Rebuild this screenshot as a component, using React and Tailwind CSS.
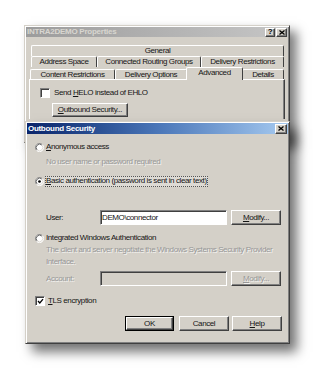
import React from "react";

const raised =
  "border border-t-white border-l-white border-r-[#404040] border-b-[#404040] shadow-[inset_-1px_-1px_#808080] bg-[#d4d0c8]";
const sunken =
  "border border-t-[#808080] border-l-[#808080] border-r-white border-b-white shadow-[inset_1px_1px_#404040]";
const dis = "text-[#979797] [text-shadow:1px_1px_0_rgba(255,255,255,0.75)]";

function Radio({ checked }) {
  return (
    <svg width="9" height="9" viewBox="0 0 12 12" className="shrink-0">
      <circle cx="6" cy="6" r="5.5" fill="#fff" />
      <path d="M2.11 9.89 A5.5 5.5 0 0 1 9.89 2.11" stroke="#808080" strokeWidth="1" fill="none" />
      <path d="M9.89 2.11 A5.5 5.5 0 0 1 2.11 9.89" stroke="#ffffff" strokeWidth="1" fill="none" />
      <path d="M2.82 9.18 A4.5 4.5 0 0 1 9.18 2.82" stroke="#404040" strokeWidth="1" fill="none" />
      <path d="M9.18 2.82 A4.5 4.5 0 0 1 2.82 9.18" stroke="#d4d0c8" strokeWidth="1" fill="none" />
      {checked && <circle cx="6" cy="6" r="1.8" fill="#000" />}
    </svg>
  );
}

function Check({ checked }) {
  return (
    <div className={`w-[8px] h-[8px] shrink-0 bg-white box-content ${sunken} flex items-center justify-center`}>
      {checked && (
        <svg width="7" height="7" viewBox="0 0 7 7">
          <path d="M1 3 L2.8 5 L6 1.2" stroke="#000" strokeWidth="1.3" fill="none" />
        </svg>
      )}
    </div>
  );
}

function Btn({ children, className = "", disabled, def }) {
  const inner = (
    <div className={`${raised} flex items-center justify-center h-full w-full ${disabled ? dis : ""}`}>
      {children}
    </div>
  );
  if (def)
    return <div className={`border border-black ${className}`}>{inner}</div>;
  return <div className={className}>{inner}</div>;
}

function Tab({ children, w, selected }) {
  return (
    <div
      className={`flex items-center justify-center border-t border-l border-t-white border-l-white border-r border-r-[#404040] rounded-t-[2px] bg-[#d4d0c8] shrink-0 ${
        selected ? "h-[13px] relative z-10 -mx-[1px]" : "h-[10px] mt-[2px]"
      }`}
      style={{ width: w }}
    >
      {children}
    </div>
  );
}

function TitleBtn({ children, w }) {
  return (
    <div
      className={`${raised} h-[9px] flex items-center justify-center text-black font-bold text-[8px] leading-none`}
      style={{ width: w }}
    >
      {children}
    </div>
  );
}

const XGlyph = () => (
  <svg width="6" height="5" viewBox="0 0 6 5">
    <path d="M0.5 0.5 L5.5 4.5 M5.5 0.5 L0.5 4.5" stroke="#000" strokeWidth="1.3" />
  </svg>
);

export default function App() {
  return (
    <div className="relative w-[336px] h-[389px] bg-white overflow-hidden font-['Liberation_Sans',Arial,sans-serif] text-[8px] leading-[12px] tracking-[-0.4px] text-[#151515]">
      {/* Outer properties window */}
      <div className="absolute left-[24px] top-[25px] w-[266px] h-[118px] p-[1px] bg-[#d4d0c8] border border-t-[#d4d0c8] border-l-[#d4d0c8] border-r-[#404040] border-b-[#404040] shadow-[inset_1px_1px_#fff,inset_-1px_-1px_#808080,7px_6px_10px_rgba(0,0,0,0.5)] flex flex-col">
        <div className="h-[10px] flex items-center justify-between bg-gradient-to-r from-[#9c9c9c] to-[#c6c6c6] pl-[1px] pr-[1px]">
          <span className="font-bold text-[#d8d6d0] tracking-[-0.25px] leading-none">INTRA2DEMO Properties</span>
          <div className="flex gap-[1px]">
            <TitleBtn w={10}>?</TitleBtn>
            <TitleBtn w={11}>
              <XGlyph />
            </TitleBtn>
          </div>
        </div>
        <div className="mt-[8px] ml-[3px] w-[256px] flex flex-col leading-none">
          <div className="flex ml-[2px] h-[11px]">
            <div className="flex items-center justify-center w-[253px] h-[11px] border-t border-l border-t-white border-l-white border-r border-r-[#404040] rounded-t-[2px]">
              General
            </div>
          </div>
          <div className="flex ml-[2px] h-[11px]">
            <div className="flex items-center justify-center w-[66px] h-[11px] border-t border-l border-t-white border-l-white border-r border-r-[#404040] rounded-t-[2px]">
              Address Space
            </div>
            <div className="flex items-center justify-center w-[104px] h-[11px] border-t border-l border-t-white border-l-white border-r border-r-[#404040] rounded-t-[2px]">
              Connected Routing Groups
            </div>
            <div className="flex items-center justify-center w-[83px] h-[11px] border-t border-l border-t-white border-l-white border-r border-r-[#404040] rounded-t-[2px]">
              Delivery Restrictions
            </div>
          </div>
          <div className="flex ml-[1px] h-[12px] items-start">
            <Tab w={85}>Content Restrictions</Tab>
            <Tab w={72}>Delivery Options</Tab>
            <Tab w={57} selected>
              <span className="-mt-[2px]">Advanced</span>
            </Tab>
            <Tab w={42}>Details</Tab>
          </div>
          <div className="h-[40px] border-t border-l border-t-white border-l-white border-r border-r-[#404040] shadow-[inset_-1px_0_#808080] pl-[10px] pt-[8px] flex flex-col">
            <div className="flex items-center gap-[4px] h-[10px]">
              <Check />
              <span>
                Send <u>H</u>ELO instead of EHLO
              </span>
            </div>
            <Btn className="ml-[12px] mt-[5px] w-[76px] h-[14px]">
              <span>
                <u>O</u>utbound Security...
              </span>
            </Btn>
          </div>
        </div>
      </div>

      {/* Outbound Security dialog */}
      <div className="absolute left-[25px] top-[121px] w-[265px] h-[223px] p-[1px] bg-[#d4d0c8] border border-t-[#d4d0c8] border-l-[#d4d0c8] border-r-[#404040] border-b-[#404040] shadow-[inset_1px_1px_#fff,inset_-1px_-1px_#808080,7px_8px_11px_rgba(0,0,0,0.55)] flex flex-col">
        <div className="h-[11px] flex items-center justify-between bg-gradient-to-r from-[#0a246a] via-[#4a76b8] to-[#a6caf0] pl-[1px] pr-[1px]">
          <span className="font-bold text-white tracking-[-0.3px] leading-none">Outbound Security</span>
          <div className={`${raised} w-[12px] h-[10px] flex items-center justify-center`}>
            <XGlyph />
          </div>
        </div>
        <div className="flex flex-col items-stretch pl-[8px] pr-[6px]">
          <div className="mt-[7px] h-[12px] flex items-center gap-[2px]">
            <Radio />
            <span>
              <u>A</u>nonymous access
            </span>
          </div>
          <div className={`mt-[3px] h-[12px] ml-[11px] ${dis}`}>No user name or password required</div>
          <div className="mt-[7px] h-[12px] flex items-center gap-[1px]">
            <Radio checked />
            <div className="w-fit h-[11px] flex items-center outline outline-1 outline-dotted outline-[#555] -outline-offset-1 px-[1px] bg-[#dedbd5] whitespace-nowrap">
              <u>B</u>asic authentication (password is sent in clear text)
            </div>
          </div>
          <div className="mt-[23px] h-[15px] flex items-center ml-[11px]">
            <span className="w-[54px] shrink-0">User:</span>
            <div className={`w-[127px] h-[15px] bg-white ${sunken} flex items-center pl-[1px]`}>DEMO\connector</div>
            <Btn className="ml-[4px] w-[50px] h-[15px]">
              <span>
                <u>M</u>odify...
              </span>
            </Btn>
          </div>
          <div className="mt-[7px] h-[12px] flex items-center gap-[2px]">
            <Radio />
            <span>Integrated Windows Authentication</span>
          </div>
          <div className={`ml-[11px] ${dis}`}>
            <div className="h-[12px]">The client and server negotiate the Windows Systems Security Provider</div>
            <div className="h-[12px]">Interface.</div>
          </div>
          <div className="mt-[3px] h-[15px] flex items-center ml-[11px]">
            <span className={`w-[54px] shrink-0 ${dis}`}>Account:</span>
            <div className={`w-[127px] h-[15px] bg-[#d4d0c8] ${sunken}`} />
            <Btn className="ml-[4px] w-[50px] h-[15px]" disabled>
              <span>
                <u>M</u>odify...
              </span>
            </Btn>
          </div>
          <div className="mt-[9px] h-[12px] flex items-center gap-[3px]">
            <Check checked />
            <span>
              <u>T</u>LS encryption
            </span>
          </div>
          <div className="mt-[9px] h-[15px] flex justify-end">
            <Btn className="w-[49px] h-[15px]" def>
              OK
            </Btn>
            <Btn className="ml-[5px] w-[50px] h-[15px]">Cancel</Btn>
            <Btn className="ml-[3px] w-[50px] h-[15px]">
              <span>
                <u>H</u>elp
              </span>
            </Btn>
          </div>
        </div>
      </div>
    </div>
  );
}
